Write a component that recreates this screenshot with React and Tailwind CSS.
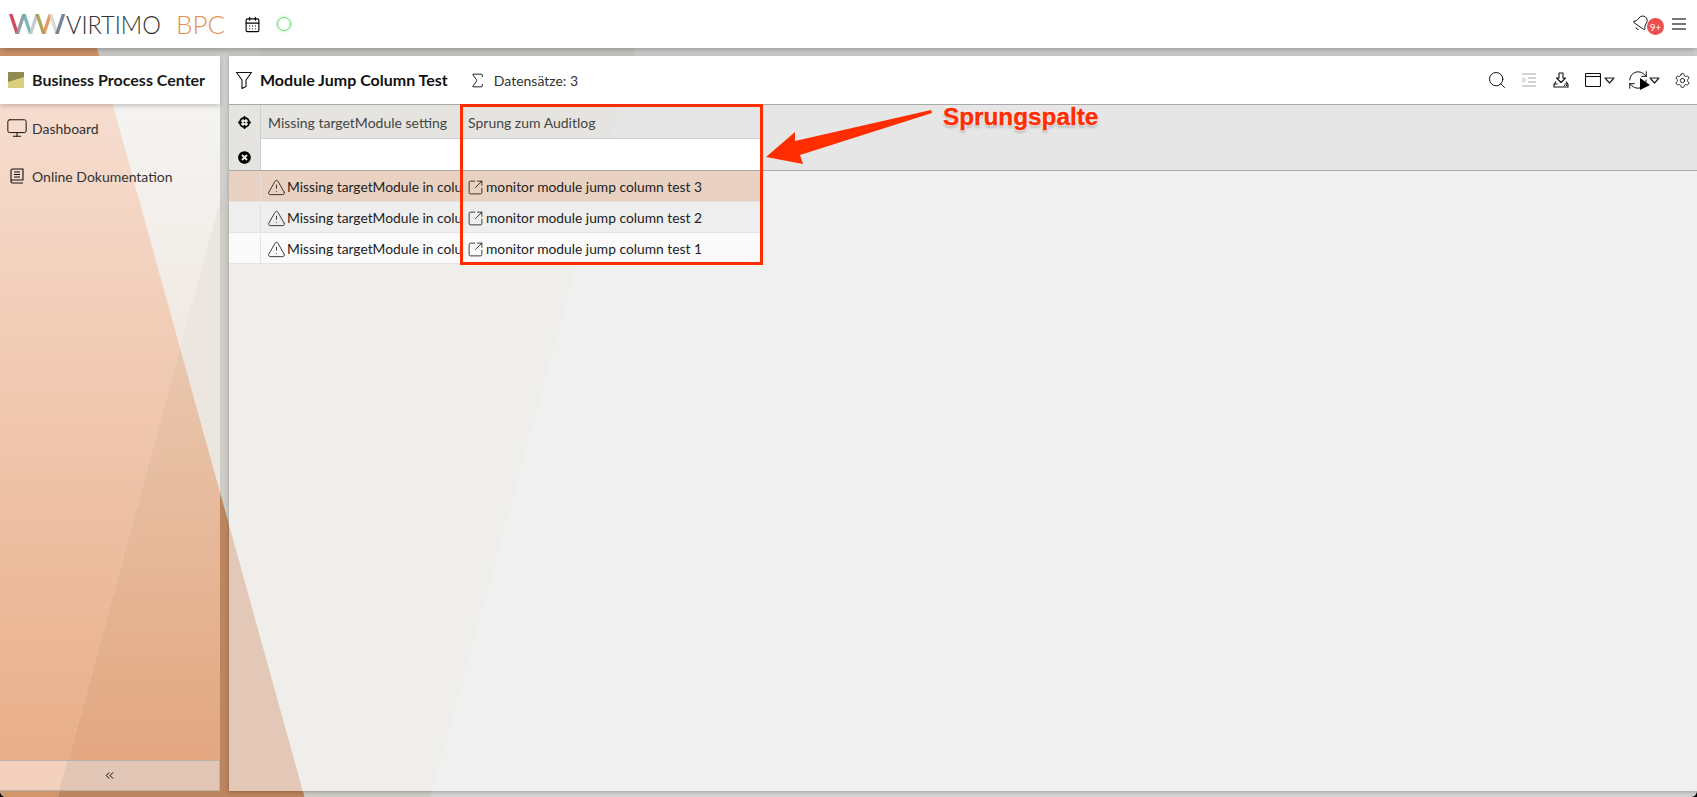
import { Search, Settings, RefreshCw, Monitor, TriangleAlert, SquareArrowOutUpRight, Sigma, CalendarDays, Bell, ChevronsLeft } from "lucide-react";
import { FaCrosshairs, FaTimesCircle } from "react-icons/fa";

const rows = [
  { id: 3, bg: "bg-[#ead2c3]" },
  { id: 2, bg: "bg-[#eeeeee]" },
  { id: 1, bg: "bg-[#fafafa]" },
];

const logoStripes = ["#c8374a", "#8d929c", "#6fb0b2", "#b9c8cc", "#a89a48", "#e08e4e", "#d8d5c8", "#66788f"];

// the diagonal bands of the page background, in page coordinates
function Bands({ x = 0, y = 0, a, b, c, d, e }) {
  return (
    <g transform={`translate(${-x} ${-y})`}>
      <rect x="0" y="0" width="1697" height="797" fill={e} />
      <polygon points="275,0 649,0 431,797 304.5,797 180,348" fill={d} />
      <polygon points="83.7,0 275,0 180,348" fill={c} />
      <polygon points="0,0 83.7,0 180,348 58,797 0,797" fill={a} />
      <polygon points="180,348 304.5,797 58,797" fill={b} />
    </g>
  );
}

function VirtimoLogo() {
  return (
    <svg width="58" height="22" viewBox="0 0 58 22" className="shrink-0">
      {logoStripes.map((color, i) => {
        const left = i * 6.6;
        const next = left + 6.6;
        const points =
          i % 2 === 0
            ? `${left},1 ${left + 3.5},1 ${next + 3.5},21 ${next},21`
            : `${left},21 ${left + 3.5},21 ${next + 3.5},1 ${next},1`;
        return <polygon key={color} points={points} fill={color} opacity="0.9" />;
      })}
    </svg>
  );
}

function Caret() {
  return (
    <svg width="11" height="7" viewBox="0 0 11 7" className="shrink-0">
      <path d="M1 1h9L5.5 6z" fill="none" stroke="#222" strokeWidth="1.2" strokeLinejoin="round" />
    </svg>
  );
}

function TopBar() {
  return (
    <header className="relative z-10 flex h-12 shrink-0 items-center bg-white pl-[9px] pr-[11px] shadow-[0_2px_7px_rgba(0,0,0,0.3)]">
      <VirtimoLogo />
      <span className="ml-[-1px] w-[94px] origin-left scale-x-[0.94] whitespace-nowrap text-[25px] font-light leading-none text-[#333]">VIRTIMO</span>
      <span className="ml-[16px] text-[26px] font-light leading-none text-[#e59055]">BPC</span>
      <CalendarDays size={17} strokeWidth={1.6} className="ml-[19px] text-black" />
      <span className="ml-[16px] h-[14px] w-[14px] rounded-full border-[1.5px] border-[#66d366] shadow-[0_0_3px_#9be79b]" />
      <div className="ml-auto flex items-center">
        <div className="relative mr-[20px] h-5 w-5">
          <Bell size={18} strokeWidth={1.1} className="rotate-[35deg] text-black" />
          <span className="absolute left-[15px] top-[4px] flex h-[17px] w-[17px] items-center justify-center rounded-full bg-[#ee4f4f] text-[10px] leading-none text-white">
            9+
          </span>
        </div>
        <div className="flex w-[14px] flex-col gap-[3px]">
          <span className="h-[2px] bg-[#777]" />
          <span className="h-[2px] bg-[#777]" />
          <span className="h-[2px] bg-[#777]" />
        </div>
      </div>
    </header>
  );
}

function Sidebar() {
  return (
    <aside className="relative flex w-[220px] shrink-0 flex-col">
      <svg className="absolute inset-0 h-full w-full" viewBox="0 0 220 735" preserveAspectRatio="none">
        <defs>
          <linearGradient id="sideA" gradientUnits="userSpaceOnUse" x1="0" y1="104" x2="0" y2="760">
            <stop offset="0" stopColor="#f6ddcf" />
            <stop offset="1" stopColor="#e9ae89" />
          </linearGradient>
          <linearGradient id="sideB" gradientUnits="userSpaceOnUse" x1="0" y1="348" x2="0" y2="760">
            <stop offset="0" stopColor="#e9c7ae" />
            <stop offset="1" stopColor="#e3a781" />
          </linearGradient>
          <linearGradient id="sideC" gradientUnits="userSpaceOnUse" x1="0" y1="104" x2="0" y2="348">
            <stop offset="0" stopColor="#f5f4f2" />
            <stop offset="1" stopColor="#f0e9e3" />
          </linearGradient>
        </defs>
        <Bands y={56} a="url(#sideA)" b="url(#sideB)" c="url(#sideC)" d="#ebe6e0" e="#ebe6e0" />
      </svg>
      <div className="relative flex h-12 items-center bg-white pl-2 shadow-[0_2px_5px_rgba(0,0,0,0.2)]">
        <svg width="16" height="16" viewBox="0 0 16 16" className="shrink-0">
          <rect width="16" height="16" fill="#d9cf7f" />
          <polygon points="0,0 16,0 16,5 0,10" fill="#8f8a52" />
        </svg>
        <span className="ml-2 text-[16px] font-bold text-[#1a1a1a]">Business Process Center</span>
      </div>
      <nav className="relative flex flex-col pl-[6px] text-[14px] text-[#333]">
        <a className="flex h-12 items-center">
          <Monitor size={22} strokeWidth={1} className="text-black" />
          <span className="ml-1">Dashboard</span>
        </a>
        <a className="flex h-12 items-center pl-[2px]">
          <svg width="18" height="18" viewBox="0 0 18 18" fill="none" stroke="#111" strokeWidth="1.1">
            <path d="M3 14V3.5A1.5 1.5 0 0 1 4.500 2H15v11H4.500A1.500 1.500 0 0 0 3 14.500 1.500 1.500 0 0 0 4.500 16H15" />
            <path d="M6 5h6M6 7.500h6M6 10h6" />
          </svg>
          <span className="ml-[6px]">Online Dokumentation</span>
        </a>
      </nav>
      <button className="relative mt-auto flex h-[31px] items-center justify-center overflow-hidden border border-l-0 border-[#b9b3ab] text-black">
        <svg className="absolute inset-0 h-full w-full" viewBox="0 0 220 31" preserveAspectRatio="none">
          <Bands y={760} a="#f3d1bc" b="#e2c7b6" c="#e2c7b6" d="#e2c7b6" e="#e2c7b6" />
        </svg>
        <ChevronsLeft size={13} strokeWidth={1.8} className="relative" />
      </button>
    </aside>
  );
}

function Toolbar() {
  return (
    <div className="relative flex h-12 shrink-0 items-center bg-white pl-[6px] pr-[6px]">
      <svg width="18" height="18" viewBox="0 0 18 18" fill="none" stroke="#111" strokeWidth="1.1" className="shrink-0">
        <path d="M1.500 1.500h15L11 9v6.500l-4 2V9z" strokeLinejoin="round" />
      </svg>
      <span className="ml-[7px] text-[16px] font-bold text-[#111]">Module Jump Column Test</span>
      <Sigma size={19} strokeWidth={1.1} className="ml-[20px] text-black" />
      <span className="ml-[7px] text-[14px] text-[#333]">Datensätze: 3</span>
      <div className="ml-auto flex items-center">
        <Search size={20} strokeWidth={1.1} className="text-black" />
        <svg width="14" height="14" viewBox="0 0 14 14" fill="none" stroke="#c4c4c4" strokeWidth="1.500" className="ml-[15px]">
          <path d="M0 1h14M6 5h8M6 9h8M0 13h14" />
          <path d="M1 5l3 2-3 2z" strokeWidth="1" />
        </svg>
        <svg width="16" height="16" viewBox="0 0 16 16" fill="none" stroke="#111" strokeWidth="1.100" className="ml-[17px]">
          <path d="M6 1h4v5h2.500L8 10.500 3.500 6H6z" strokeLinejoin="round" />
          <path d="M3 9.500l-2 3v2.500h14v-2.500l-2-3" />
          <path d="M1 12h3.500M11.500 12H15" />
          <path d="M11 13.500h1M13 13.500h1" />
        </svg>
        <svg width="16" height="14" viewBox="0 0 16 14" fill="none" stroke="#111" strokeWidth="1.100" className="ml-[16px]">
          <rect x="0.500" y="0.500" width="15" height="13" rx="1" />
          <path d="M0.500 3.500h15" />
        </svg>
        <span className="ml-[3px]"><Caret /></span>
        <div className="relative ml-[12px] h-[22px] w-[22px]">
          <RefreshCw size={22} strokeWidth={1} className="text-black" />
          <svg width="10" height="12" viewBox="0 0 10 12" className="absolute left-[13px] top-[9px]">
            <path d="M0 0l10 7-10 5z" fill="#000" />
          </svg>
        </div>
        <Caret />
        <Settings size={17} strokeWidth={1.15} className="ml-[14px] text-black" />
      </div>
    </div>
  );
}

function Grid() {
  return (
    <div className="relative flex flex-col text-[14px]">
      <div className="flex h-[67px] border-y border-[#aaa] bg-black/[0.04]">
        <div className="flex w-[32px] shrink-0 flex-col items-center border-r border-[#cfcfcf]">
          <div className="flex h-[34px] items-center justify-center">
            <FaCrosshairs size={13} className="text-black" />
          </div>
          <div className="flex flex-1 items-center justify-center pt-[6px]">
            <FaTimesCircle size={13} className="text-black" />
          </div>
        </div>
        <div className="flex w-[200px] shrink-0 flex-col">
          <div className="flex h-[33px] items-center border-r border-[#d2d2d2] pl-[7px] pt-px text-[#444]">
            Missing targetModule setting
          </div>
          <div className="flex-1 border-t border-[#cfcfcf] bg-white" />
        </div>
        <div className="flex w-[301px] shrink-0 flex-col">
          <div className="flex h-[33px] items-center pl-[7px] pt-px text-[#444]">Sprung zum Auditlog</div>
          <div className="flex-1 border-t border-[#cfcfcf] bg-white" />
        </div>
      </div>
      {rows.map((row) => (
        <div key={row.id} className={`flex h-[31px] w-[533px] border-b border-[#e4e4e4] pt-[2px] text-[13.8px] ${row.bg}`}>
          <div className="w-[32px] shrink-0 border-r border-[#e2e2e2]" />
          <div className="flex w-[200px] shrink-0 items-center overflow-hidden whitespace-nowrap pl-[6px] text-[#222]">
            <TriangleAlert size={19} strokeWidth={0.95} className="mr-[1px] shrink-0 text-black" />
            Missing targetModule in column
          </div>
          <div className="flex flex-1 items-center whitespace-nowrap pl-[6px] text-[#222]">
            <SquareArrowOutUpRight size={17} strokeWidth={1.05} className="mr-[2px] shrink-0 text-black" />
            monitor module jump column test {row.id}
          </div>
        </div>
      ))}
    </div>
  );
}

export default function App() {
  return (
    <div className="relative h-screen w-full overflow-hidden bg-black font-['Lato','Noto_Sans',sans-serif]">
      <div className="relative flex h-full flex-col overflow-hidden rounded-b-[6px]">
        <svg className="absolute inset-0 h-full w-full" viewBox="0 0 1697 797" preserveAspectRatio="none">
          <Bands a="#d2966c" b="#bb8560" c="#cfcfcd" d="#cdccc7" e="#d4d4d4" />
        </svg>
        <TopBar />
        <div className="relative mt-2 flex h-[735px] shrink-0">
          <Sidebar />
          <main className="relative ml-[9px] flex flex-1 flex-col overflow-hidden shadow-[0_1px_4px_rgba(0,0,0,0.25)]">
            <svg className="absolute inset-0 h-full w-full" viewBox="0 0 1468 735" preserveAspectRatio="none">
              <Bands x={229} y={56} a="#e3c8b7" b="#e3c8b7" c="#efeeea" d="#efeeea" e="#f0f0f0" />
            </svg>
            <Toolbar />
            <Grid />
          </main>
        </div>
      </div>

      {/* annotation drawn over the screenshot */}
      <div className="absolute left-[460px] top-[104px] h-[161px] w-[303px] border-[3px] border-[#ff2d00]" />
      <svg className="absolute left-[760px] top-[105px]" width="180" height="70" viewBox="760 105 180 70">
        <path d="M766 157L795 132L795 141L931 110L932 113L800 155L803 164Z" fill="#ff2d00" />
      </svg>
      <span className="absolute left-[943px] top-[102px] font-['Liberation_Sans',sans-serif] text-[24.3px] font-bold leading-[30px] text-[#ff2d00] [-webkit-text-stroke:0.4px_#ff2d00] [text-shadow:0_0_2px_#fff,0_0_2px_#fff,0_0_3px_#fff,0_0_3px_#fff,0_2px_3px_#888]">
        Sprungspalte
      </span>
    </div>
  );
}
